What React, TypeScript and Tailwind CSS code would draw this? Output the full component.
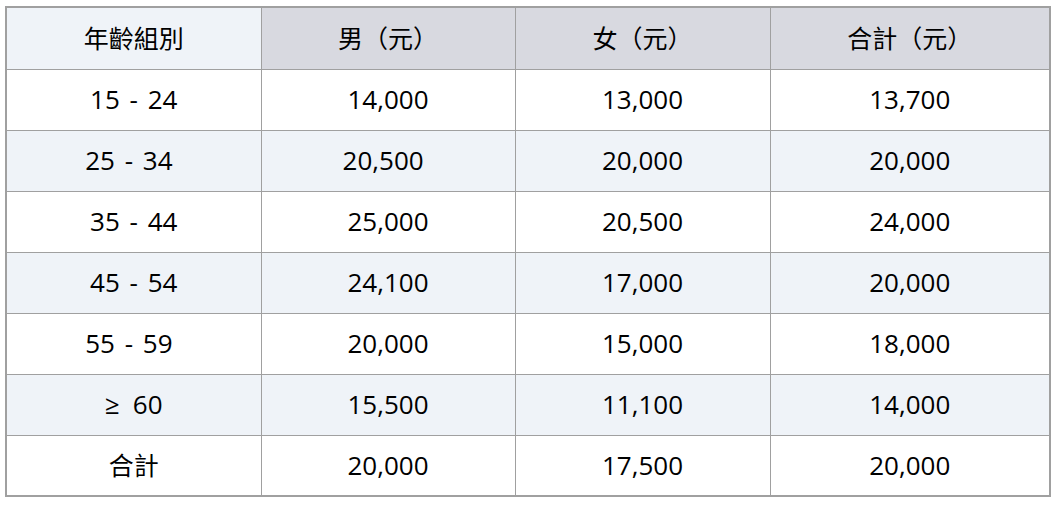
const headers = ["年齡組別", "男（元）", "女（元）", "合計（元）"];

const rows: string[][] = [
  ["15 - 24", "14,000", "13,000", "13,700"],
  ["25 - 34\u00a0", "20,500\u00a0", "20,000", "20,000"],
  ["35 - 44", "25,000", "20,500", "24,000"],
  ["45 - 54", "24,100", "17,000", "20,000"],
  ["55 - 59\u00a0", "20,000", "15,000", "18,000"],
  ["≥\u200260", "15,500", "11,100", "14,000"],
  ["合計", "20,000", "17,500", "20,000"],
];

export default function App() {
  return (
    <div
      className="w-[1057px] h-[506px] bg-white pl-[5px] pt-[6px] text-black"
      style={{ fontFamily: '"Open Sans", "Noto Sans CJK TC", sans-serif' }}
    >
      <table className="table-fixed w-[1046px] border-collapse border-2 border-[#a0a0a0]">
        <colgroup>
          <col className="w-[255px]" />
          <col className="w-[254px]" />
          <col className="w-[255px]" />
          <col className="w-[280px]" />
        </colgroup>
        <thead>
          <tr>
            {headers.map((h, i) => (
              <th
                key={h}
                className={`h-[62px] border border-[#a0a0a0] font-normal text-center text-[25px] ${
                  i === 0 ? "bg-[#eff3f8]" : "bg-[#d8d9e0]"
                }`}
              >
                {h}
              </th>
            ))}
          </tr>
        </thead>
        <tbody>
          {rows.map((row, r) => (
            <tr key={r} className={r % 2 === 1 ? "bg-[#eff3f8]" : "bg-white"}>
              {row.map((cell, c) => (
                <td
                  key={c}
                  className={`h-[61px] border border-[#a0a0a0] text-center whitespace-pre [word-spacing:3px] ${
                    cell === "合計" ? "text-[25px]" : "text-[26px]"
                  }`}
                >
                  {cell}
                </td>
              ))}
            </tr>
          ))}
        </tbody>
      </table>
    </div>
  );
}
